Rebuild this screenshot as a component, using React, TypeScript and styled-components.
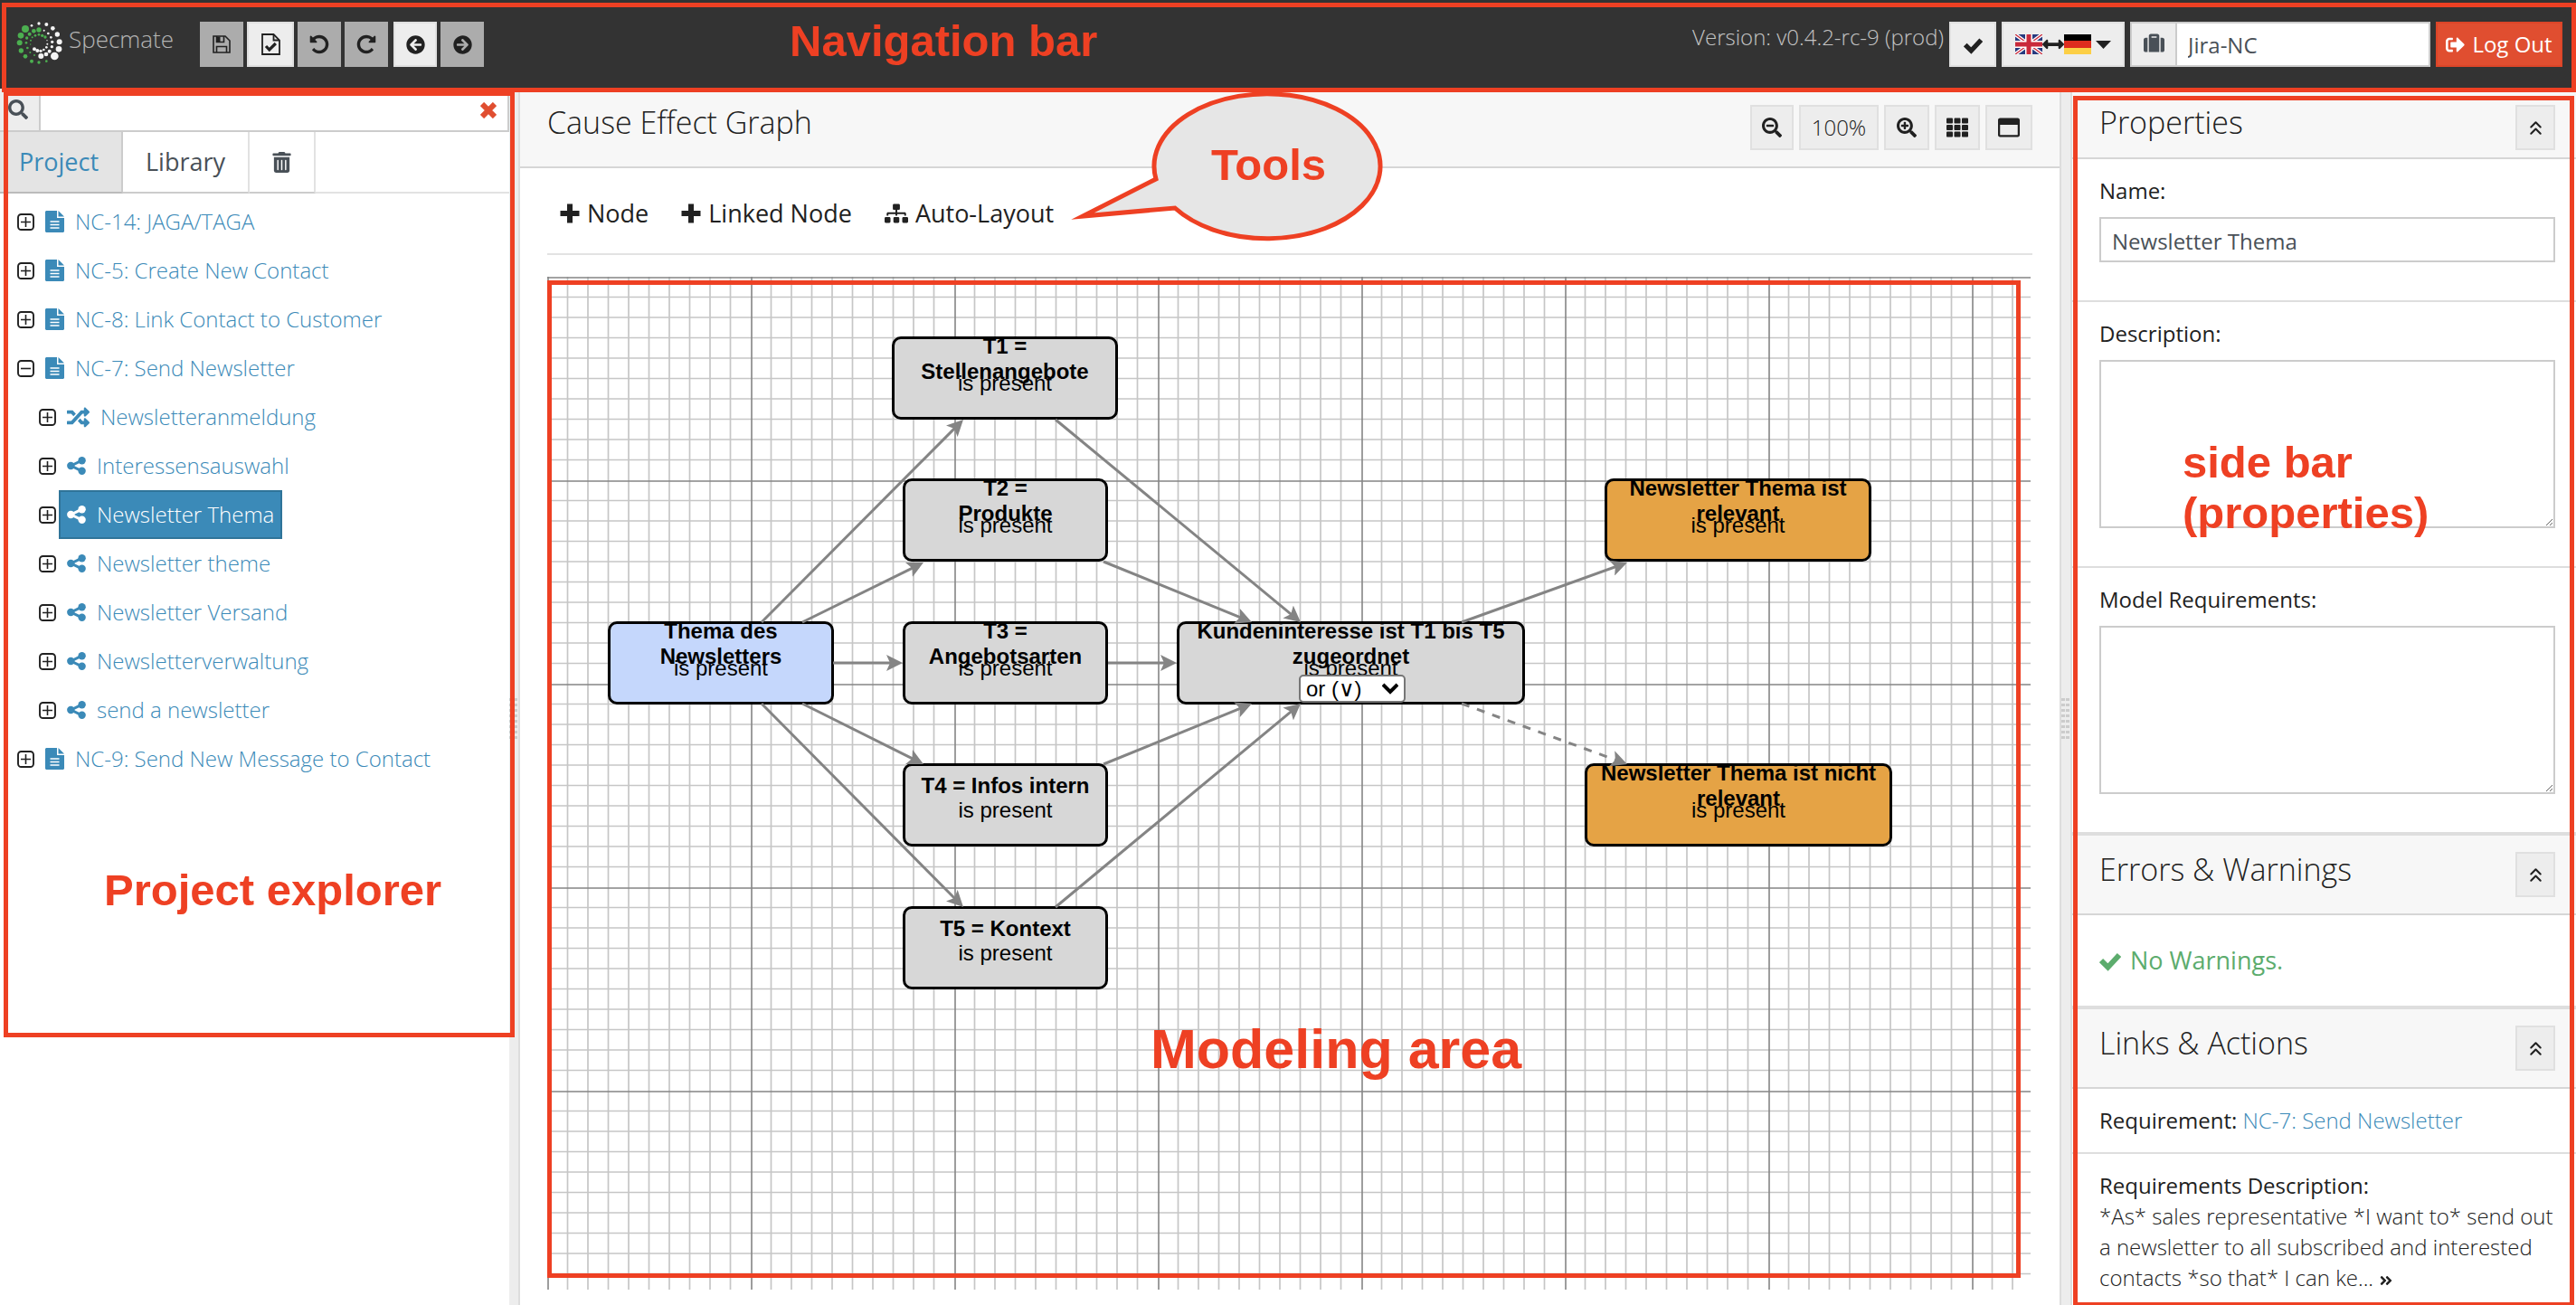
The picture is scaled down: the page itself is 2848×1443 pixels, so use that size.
import React from "react";
import styled, { createGlobalStyle, css } from "styled-components";
import {
  FaAngleDoubleRight,
  FaArrowCircleLeft,
  FaArrowCircleRight,
  FaArrowsAltH,
  FaRandom,
  FaRegWindowMaximize,
  FaSearch,
  FaSearchMinus,
  FaSearchPlus,
  FaSignOutAlt,
  FaSitemap,
  FaSuitcase,
  FaTh,
  FaTrashAlt,
} from "react-icons/fa";
import { ChevronsUp } from "lucide-react";

const c = {
  red: "#ee4023",
  dark: "#333333",
  text: "#212121",
  input: "#495057",
  link: "#3b8ab8",
  button: "#ededed",
  buttonEdge: "#e0e0e0",
  head: "#f7f7f7",
  line: "#d6d6d6",
  field: "#cccccc",
  edge: "#848484",
};

const Global = createGlobalStyle`
  *, *::before, *::after { box-sizing: border-box; }
  body { margin: 0; background: #fff; }
  body, button, input, textarea, select {
    font-family: "Open Sans", "Noto Sans", sans-serif;
    font-size: 24px;
    line-height: 34px;
    color: ${c.text};
  }
  h2, p { margin: 0; }
  a { text-decoration: none; color: ${c.link}; }
`;

/* ---------- shell ---------- */

const Shell = styled.div`
  position: relative;
  display: flex;
  flex-direction: column;
  min-height: 100vh;
  overflow: hidden;
`;

const Columns = styled.div`
  flex: 1;
  display: flex;
`;

const Gutter = styled.div<{ $both?: boolean }>`
  flex: none;
  width: ${(p) => (p.$both ? 14 : 12)}px;
  padding-top: 674px;
  background: #ededed;
  border-right: 2px solid #dddddd;
  border-left: ${(p) => (p.$both ? "2px solid #dddddd" : "none")};
`;

const Grip = styled.div`
  width: 9px;
  height: 46px;
  background:
    linear-gradient(90deg, transparent 4px, #ededed 4px, #ededed 5px, transparent 5px),
    repeating-linear-gradient(#cccccc 0 3px, transparent 3px 6px);
`;

/* ---------- annotations over the page ---------- */

const Frame = styled.div<{ $inset: string }>`
  position: absolute;
  inset: ${(p) => p.$inset};
  border: 5px solid ${c.red};
  pointer-events: none;
  z-index: 3;
`;

const Note = styled.div<{ $left: number; $top: number; $big?: boolean }>`
  position: absolute;
  left: ${(p) => p.$left}px;
  top: ${(p) => p.$top}px;
  font: bold ${(p) => (p.$big ? "61px/68px" : "49px/56px")} "Liberation Sans", Arial, sans-serif;
  color: ${c.red};
  white-space: nowrap;
  pointer-events: none;
  z-index: 4;
`;

const Balloon = styled.svg`
  position: absolute;
  left: 1180px;
  top: 94px;
  z-index: 4;
  pointer-events: none;
`;

/* ---------- navigation bar ---------- */

const Nav = styled.header`
  position: relative;
  display: flex;
  align-items: flex-start;
  padding: 24px 15px 24px 18px;
  background: ${c.dark};
`;

const Brand = styled.a`
  display: flex;
  gap: 6px;
  width: 203px;
  font-size: 26px;
  line-height: 38px;
  font-weight: 300;
  color: #b4b4b4;
`;

const Group = styled.div`
  display: flex;
  gap: 4px;
  margin-right: 6px;
`;

const Button = styled.button<{ $w?: number; $tone?: "off" | "danger" }>`
  display: flex;
  align-items: center;
  justify-content: center;
  flex: none;
  width: ${(p) => p.$w ?? 48}px;
  height: 50px;
  padding: 0;
  border: 2px solid ${c.buttonEdge};
  background: ${c.button};
  font-weight: 300;
  ${(p) =>
    p.$tone === "off" &&
    css`
      background: #acacac;
      border-color: #acacac;
    `}
  ${(p) =>
    p.$tone === "danger" &&
    css`
      gap: 8px;
      background: #e04e30;
      border-color: #dc4528;
      color: #fff;
      font-weight: 400;
    `}
`;

const Version = styled.span`
  font-weight: 300;
  color: #c4c4c4;
`;

const NavRight = styled.div`
  display: flex;
  gap: 6px;
  margin-left: auto;
`;

const ProjectField = styled.label`
  display: flex;
  width: 332px;
  height: 50px;
  border: 2px solid ${c.field};
  background: ${c.button};

  span {
    display: flex;
    align-items: center;
    justify-content: center;
    width: 50px;
    padding-bottom: 4px;
    border-right: 2px solid ${c.field};
    color: ${c.input};
  }

  input {
    flex: 1;
    min-width: 0;
    border: 0;
    padding: 2px 12px 0;
    background: #fff;
    color: ${c.input};
  }
`;

/* ---------- project explorer ---------- */

const Explorer = styled.aside`
  position: relative;
  flex: none;
  width: 563px;
`;

const SearchRow = styled.div`
  display: flex;
  align-items: center;
  height: 48px;
  border-bottom: 2px solid ${c.field};
  border-right: 2px solid ${c.field};

  label {
    display: flex;
    align-items: center;
    align-self: stretch;
    width: 45px;
    padding-left: 9px;
    background: ${c.button};
    border-right: 2px solid ${c.field};
    color: ${c.input};
  }

  input {
    flex: 1;
    min-width: 0;
    border: 0;
    background: none;
  }

  button {
    display: flex;
    padding: 2px 12px 0;
    border: 0;
    background: none;
    color: #e04e30;
  }
`;

const Tabs = styled.div`
  display: flex;
  height: 68px;
  border-bottom: 2px solid #e2e2e2;
`;

const Tab = styled.button<{ $active?: boolean; $w: number }>`
  display: flex;
  align-items: center;
  justify-content: center;
  width: ${(p) => p.$w}px;
  padding: ${(p) => (p.$active ? "0 4px 0 0" : "0")};
  border: 0;
  border-right: 2px solid ${(p) => (p.$active ? c.field : "#e2e2e2")};
  margin-bottom: -2px;
  border-bottom: 2px solid ${(p) => (p.$active ? "#bbbbbb" : "#cccccc")};
  background: ${(p) => (p.$active ? "#e4e4e4" : "#fff")};
  color: ${(p) => (p.$active ? c.link : c.input)};
  font-size: 27px;
`;

const Tree = styled.ul`
  list-style: none;
  margin: 0;
  padding: 4px 0 0 18px;

  ul {
    list-style: none;
    margin: 0;
    padding: 0 0 0 24px;
  }
`;

const TreeRow = styled.div`
  display: flex;
  align-items: center;
  gap: 2px;
`;

const TreeLink = styled.a<{ $active?: boolean }>`
  display: flex;
  align-items: center;
  gap: 12px;
  height: 54px;
  padding: 0 7px;
  border: 2px solid ${(p) => (p.$active ? "#2f7499" : "transparent")};
  background: ${(p) => (p.$active ? c.link : "none")};
  color: ${(p) => (p.$active ? "#fff" : c.link)};
  font-weight: 300;
  white-space: nowrap;
`;

/* ---------- editor ---------- */

const Editor = styled.main`
  position: relative;
  flex: 1;
  min-width: 0;
  display: flex;
  flex-direction: column;
`;

const PanelHead = styled.div<{ $kind?: "editor" | "first" }>`
  display: flex;
  align-items: flex-start;
  gap: 6px;
  padding: 18px ${(p) => (p.$kind === "editor" ? 30 : 23)}px
    ${(p) => (p.$kind === "first" ? 8 : 18)}px 30px;
  background: ${c.head};
  border-bottom: 2px solid ${c.line};
  border-top: ${(p) => (p.$kind ? "none" : "4px solid #dedede")};

  h2 {
    flex: 1;
    font-size: 34px;
    line-height: 38px;
    font-weight: 300;
  }
`;

const Toolbar = styled.div`
  display: flex;
  gap: 8px;
  margin: 0 30px;
  padding: 25px 0 19px;
  border-bottom: 2px solid #e3e3e3;
`;

const Tool = styled.button`
  display: flex;
  align-items: center;
  gap: 8px;
  height: 50px;
  padding: 0 14px;
  border: 0;
  background: none;
  font-size: 27px;
`;

const Canvas = styled.div`
  position: relative;
  flex: 1;
  margin: 24px 32px 17px 30px;
`;

const Layer = styled.svg`
  position: absolute;
  inset: 0;
  width: 100%;
  height: 100%;
  pointer-events: none;
`;

const Node = styled.div<{ $x: number; $y: number; $w: number; $fill: string }>`
  position: absolute;
  left: ${(p) => p.$x}px;
  top: ${(p) => p.$y}px;
  width: ${(p) => p.$w}px;
  height: 92px;
  display: flex;
  flex-direction: column;
  align-items: center;
  padding-top: 9px;
  border: 3px solid #000;
  border-radius: 10px;
  background: ${(p) => p.$fill};
  font: 24px/28px "Liberation Sans", Arial, sans-serif;
  color: #000;
  text-align: center;
`;

const NodeTitle = styled.strong`
  display: flex;
  align-items: center;
  flex: none;
  height: 26px;
  white-space: pre;
`;

const NodeSelect = styled.div`
  position: absolute;
  left: 132px;
  top: 56px;
  width: 118px;
  height: 31px;

  select {
    width: 100%;
    height: 100%;
    appearance: none;
    padding: 0 6px;
    border: 2px solid #767676;
    border-radius: 5px;
    background: #fff;
    font: 24px/27px "Liberation Sans", "DejaVu Sans", sans-serif;
    color: #000;
  }

  svg {
    position: absolute;
    right: 8px;
    top: 9px;
  }
`;

/* ---------- sidebar ---------- */

const Sidebar = styled.aside`
  position: relative;
  flex: none;
  width: 557px;
`;

const Section = styled.div<{ $line?: boolean; $bottom?: number }>`
  padding: 18px 23px ${(p) => p.$bottom ?? 18}px 30px;
  border-bottom: ${(p) => (p.$line ? "2px solid #dedede" : "none")};

  p { font-weight: 300; }
  a { font-weight: 300; }
  p svg { vertical-align: -2px; }
`;

const Field = styled.label`
  display: flex;
  flex-direction: column;
  gap: 12px;

  input, textarea {
    width: 100%;
    border: 2px solid ${c.field};
    border-radius: 0;
    background: #fff;
    color: ${c.input};
  }
  input { height: 50px; padding: 2px 12px 0; }
  textarea { height: 186px; padding: 8px 12px; resize: vertical; }
`;

const Success = styled.p`
  display: flex;
  align-items: center;
  gap: 10px;
  height: 100px;
  padding-left: 30px;
  font-size: 27px;
  color: #5cac6d;
`;

/* ---------- drawings ---------- */

const ring: [number, number, number, boolean][] = [
  [99, 34, 5, false], [124, 37, 6, false], [145, 50, 7, false], [160, 70, 8, false],
  [167, 95, 9, false], [165, 119, 10, false], [151, 142, 13, false], [124, 159, 4, true],
  [99, 163, 5, true], [75, 159, 6, true], [54, 143, 7, true], [40, 124, 8, true],
  [35, 98, 9, true], [39, 74, 10, true], [54, 52, 12, true], [75, 41, 4, false],
  [99, 55, 8, true], [82, 59, 7, true], [68, 69, 6, true], [59, 82, 5, true],
  [57, 98, 4, true], [61, 115, 4, true], [70, 130, 3, true], [84, 139, 3, true],
  [106, 142, 9, false], [123, 136, 7, false], [134, 126, 6, false], [142, 111, 5, false],
  [143, 95, 5, false], [139, 80, 4, false], [130, 67, 4, false], [116, 57, 3, false],
  [120, 79, 5, true], [110, 74, 5, true], [99, 71, 4, true], [87, 74, 4, true],
  [77, 80, 3, true], [72, 90, 3, true], [71, 103, 2, true], [84, 119, 6, false],
  [94, 124, 6, false], [105, 125, 5, false], [115, 121, 4, false], [124, 113, 4, false],
  [127, 102, 3, false], [126, 90, 2, false],
];

const Logo = () => (
  <svg width="52" height="47" viewBox="24 28 156 141" aria-hidden>
    {ring.map(([x, y, r, green], i) => (
      <circle key={i} cx={x} cy={y} r={r} fill={green ? "#4caf50" : "#f4f4f4"} />
    ))}
  </svg>
);

const SaveIcon = () => (
  <svg width="20" height="20" viewBox="0 0 20 20" fill="none" stroke="#212121" strokeWidth="1.6" aria-hidden>
    <path d="M1 1h13l5 5v13H1z" />
    <path d="M4.5 19v-6.5h11V19" />
    <path d="M4.5 1v6.5h8V1" />
    <path d="M4.5 1.5h4V7h-4z" fill="#212121" stroke="none" />
  </svg>
);

const FileCheckIcon = () => (
  <svg width="21" height="24" viewBox="0 0 21 24" fill="none" stroke="#212121" aria-hidden>
    <path d="M1 1h12.5L20 7.5V23H1z" strokeWidth="1.8" />
    <path d="M13.5 1v6.5H20" strokeWidth="1.8" />
    <path d="M5 14l3.8 4 7-7" strokeWidth="3.2" />
  </svg>
);

const TurnIcon = ({ redo }: { redo?: boolean }) => (
  <svg width="24" height="24" viewBox="0 0 1792 1792" fill="#212121" aria-hidden>
    <path
      transform={redo ? "translate(1792 0) scale(-1 1)" : undefined}
      d="M1664 896q0 156-61 298t-164 245-245 164-298 61q-172 0-327-72.5t-264-204.5q-7-10-6.5-22.5t8.5-20.5l137-138q10-9 25-9 16 2 23 12 73 95 179 147t225 52q104 0 198.5-40.5t163.5-109.5 109.5-163.5 40.5-198.5-40.5-198.5-109.5-163.5-163.5-109.5-198.5-40.5q-98 0-188 35.5t-160 101.5l137 138q31 30 14 69-17 40-59 40h-448q-26 0-45-19t-19-45v-448q0-42 40-59 39-17 69 14l130 129q107-101 244.5-156.5t284.5-55.5q156 0 298 61t245 164 164 245 61 298z"
    />
  </svg>
);

const Toggle = ({ open }: { open?: boolean }) => (
  <svg width="21" height="21" viewBox="0 0 21 21" fill="none" stroke="#212121" aria-hidden>
    <rect x="2" y="2" width="17" height="17" rx="3.5" strokeWidth="1.9" />
    <path d={open ? "M5 10.5h11" : "M5 10.5h11M10.5 5v11"} strokeWidth="1.6" />
  </svg>
);

const DocIcon = () => (
  <svg width="21" height="24" viewBox="0 0 21 24" fill="currentColor" aria-hidden>
    <path d="M1 0h12v8h8v15l-1 1H1l-1-1V1z" />
    <path d="M14.500 0L21 6.500h-6.500z" />
    <path d="M5.500 12h10M5.500 15.500h10M5.500 19h10" stroke="#fff" strokeWidth="1.6" />
  </svg>
);

const ShareIcon = () => (
  <svg width="21" height="20" viewBox="0 0 21 20" fill="currentColor" stroke="currentColor" aria-hidden>
    <path d="M16.5 4.200L4.500 10l12 5.800" fill="none" strokeWidth="3" />
    <g stroke="none">
      <circle cx="4.300" cy="10" r="4.200" />
      <circle cx="16.600" cy="4.300" r="4.200" />
      <circle cx="16.600" cy="15.700" r="4.200" />
    </g>
  </svg>
);

const PlusIcon = () => (
  <svg width="22" height="22" viewBox="0 0 22 22" stroke="#212121" strokeWidth="6" strokeLinejoin="round" aria-hidden>
    <path d="M0.500 11h21M11 0.500v21" />
  </svg>
);

const CrossIcon = () => (
  <svg width="18" height="18" viewBox="0 0 18 18" stroke="currentColor" strokeWidth="6" aria-hidden>
    <path d="M2 2l14 14M16 2L2 16" />
  </svg>
);

const CheckIcon = ({ width }: { width: number }) => (
  <svg width={width} height={width} viewBox="0 0 24 24" fill="none" stroke="currentColor" strokeWidth="6" aria-hidden>
    <path d="M2 12l7.500 7.500L22 6" />
  </svg>
);

const CaretIcon = styled.svg`
  margin-left: 5px;
`;

const BritishFlag = () => (
  <svg width="30" height="22" viewBox="0 0 30 22" aria-hidden>
    <rect width="30" height="22" fill="#273a7f" />
    <path d="M0 0l30 22M30 0L0 22" stroke="#fff" strokeWidth="4" />
    <path d="M0 0l30 22M30 0L0 22" stroke="#c92a3b" strokeWidth="1.4" />
    <path d="M15 0v22M0 11h30" stroke="#fff" strokeWidth="8" />
    <path d="M15 0v22M0 11h30" stroke="#c92a3b" strokeWidth="5" />
  </svg>
);

const GermanFlag = () => (
  <svg width="30" height="22" viewBox="0 0 30 22" aria-hidden>
    <rect width="30" height="22" fill="#fccf46" />
    <rect width="30" height="15" fill="#de2b1e" />
    <rect width="30" height="7" fill="#000" />
  </svg>
);

/* ---------- data ---------- */

type Item = { name: string; icon: "doc" | "flow" | "share"; active?: boolean; items?: Item[] };

const tree: Item[] = [
  { name: "NC-14: JAGA/TAGA", icon: "doc" },
  { name: "NC-5: Create New Contact", icon: "doc" },
  { name: "NC-8: Link Contact to Customer", icon: "doc" },
  {
    name: "NC-7: Send Newsletter",
    icon: "doc",
    items: [
      { name: "Newsletteranmeldung", icon: "flow" },
      { name: "Interessensauswahl", icon: "share" },
      { name: "Newsletter Thema", icon: "share", active: true },
      { name: "Newsletter theme", icon: "share" },
      { name: "Newsletter Versand", icon: "share" },
      { name: "Newsletterverwaltung", icon: "share" },
      { name: "send a newsletter", icon: "share" },
    ],
  },
  { name: "NC-9: Send New Message to Contact", icon: "doc" },
];

const grey = "#d7d7d7";
const nodes = [
  { title: "T1 =\nStellenangebote", x: 381, y: 66, w: 250, fill: grey },
  { title: "T2 =\nProdukte", x: 393, y: 223, w: 227, fill: grey },
  { title: "Thema des\nNewsletters", x: 67, y: 381, w: 250, fill: "#c5d7fc" },
  { title: "T3 =\nAngebotsarten", x: 393, y: 381, w: 227, fill: grey },
  { title: "T4 = Infos intern", x: 393, y: 538, w: 227, fill: grey },
  { title: "T5 = Kontext", x: 393, y: 696, w: 227, fill: grey },
  { title: "Kundeninteresse ist T1 bis T5\nzugeordnet", x: 696, y: 381, w: 385, fill: grey, select: true },
  { title: "Newsletter Thema ist\nrelevant", x: 1169, y: 223, w: 295, fill: "#e5a345" },
  { title: "Newsletter Thema ist nicht\nrelevant", x: 1147, y: 538, w: 340, fill: "#e5a345" },
];

const edges: [number, number, number, number, boolean?][] = [
  [237, 382, 460, 158],
  [282, 382, 416, 316],
  [316, 427, 393, 427],
  [282, 472, 416, 539],
  [237, 472, 460, 697],
  [562, 158, 833, 382],
  [615, 315, 779, 382],
  [620, 427, 696, 427],
  [615, 539, 779, 472],
  [562, 697, 833, 472],
  [1011, 382, 1194, 316],
  [1011, 472, 1194, 539, true],
];

/* ---------- parts ---------- */

const icons = {
  doc: <DocIcon />,
  flow: <FaRandom size={25} />,
  share: <ShareIcon />,
};

const TreeItem = ({ item }: { item: Item }) => (
  <li>
    <TreeRow>
      <Toggle open={!!item.items} />
      <TreeLink href="#" $active={item.active}>
        {icons[item.icon]}
        {item.name}
      </TreeLink>
    </TreeRow>
    {item.items && (
      <ul>
        {item.items.map((child) => (
          <TreeItem key={child.name} item={child} />
        ))}
      </ul>
    )}
  </li>
);

const minors = Array.from({ length: 9 }, (_, i) => ((i + 1) * 45) / 2);

const Grid = () => (
  <Layer aria-hidden>
    <defs>
      <pattern id="grid" width="225" height="225" patternUnits="userSpaceOnUse">
        {minors.map((m) => (
          <path key={m} d={`M${m} 0v225M0 ${m}h225`} stroke="#c6c6c6" strokeWidth="1.7" />
        ))}
        <path d="M1 0v225M0 1h225" stroke="#858585" strokeWidth="1.6" />
      </pattern>
    </defs>
    <rect width="100%" height="100%" fill="url(#grid)" />
  </Layer>
);

const Edges = () => (
  <Layer aria-hidden>
    <defs>
      <marker id="tip" markerUnits="userSpaceOnUse" markerWidth="18" markerHeight="18" refX="18" refY="9" orient="auto">
        <path d="M0 0l18 9-18 9 4-9z" fill={c.edge} />
      </marker>
    </defs>
    {edges.map(([x1, y1, x2, y2, dashed], i) => {
      const len = Math.hypot(x2 - x1, y2 - y1);
      const k = (len - 8) / len;
      return (
        <g key={i}>
          <line
            x1={x1}
            y1={y1}
            x2={x1 + (x2 - x1) * k}
            y2={y1 + (y2 - y1) * k}
            stroke={c.edge}
            strokeWidth="3"
            strokeDasharray={dashed ? "9 9" : undefined}
          />
          <line x1={x1} y1={y1} x2={x2} y2={y2} markerEnd="url(#tip)" stroke="none" />
        </g>
      );
    })}
  </Layer>
);

const Collapse = ({ of }: { of: string }) => (
  <Button $w={44} aria-label={`Collapse ${of}`}>
    <ChevronsUp size={25} strokeWidth={2} />
  </Button>
);

export default function App() {
  return (
    <Shell>
      <Global />
      <Nav>
        <Brand href="#">
          <Logo />
          Specmate
        </Brand>
        <Group>
          <Button $tone="off" aria-label="Save"><SaveIcon /></Button>
          <Button $w={52} aria-label="Check"><FileCheckIcon /></Button>
          <Button $tone="off" aria-label="Undo"><TurnIcon /></Button>
          <Button $tone="off" aria-label="Redo"><TurnIcon redo /></Button>
        </Group>
        <Group>
          <Button aria-label="Back"><FaArrowCircleLeft size={21} /></Button>
          <Button $tone="off" aria-label="Forward"><FaArrowCircleRight size={21} /></Button>
        </Group>
        <NavRight>
          <Version>Version: v0.4.2-rc-9 (prod)</Version>
          <Button $w={52} aria-label="Confirm"><CheckIcon width={21} /></Button>
          <Button $w={136} aria-label="Language">
            <BritishFlag />
            <FaArrowsAltH size={24} />
            <GermanFlag />
            <CaretIcon width="17" height="9" viewBox="0 0 17 9" fill="#212121" aria-hidden>
              <path d="M0 0h17L8.500 9z" />
            </CaretIcon>
          </Button>
          <ProjectField>
            <span><FaSuitcase size={23} /></span>
            <input type="text" defaultValue="Jira-NC" aria-label="Project" />
          </ProjectField>
          <Button $w={140} $tone="danger"><FaSignOutAlt size={21} />Log Out</Button>
        </NavRight>
        <Frame $inset="3px 0 -4px 2px" />
        <Note $left={873} $top={17}>Navigation bar</Note>
      </Nav>

      <Columns>
        <Explorer>
          <SearchRow>
            <label htmlFor="search" aria-label="Search"><FaSearch size={22} /></label>
            <input id="search" type="text" />
            <button aria-label="Clear search"><CrossIcon /></button>
          </SearchRow>
          <Tabs>
            <Tab $active $w={136}>Project</Tab>
            <Tab $w={140}>Library</Tab>
            <Tab $w={73} aria-label="Trash"><FaTrashAlt size={23} /></Tab>
          </Tabs>
          <Tree>
            {tree.map((item) => (
              <TreeItem key={item.name} item={item} />
            ))}
          </Tree>
          <Frame $inset="3px -6px 296px 4px" />
          <Note $left={115} $top={858}>Project explorer</Note>
        </Explorer>
        <Gutter><Grip /></Gutter>

        <Editor>
          <PanelHead $kind="editor">
            <h2>Cause Effect Graph</h2>
            <Button aria-label="Zoom out"><FaSearchMinus size={22} /></Button>
            <Button $w={88}>100%</Button>
            <Button $w={50} aria-label="Zoom in"><FaSearchPlus size={22} /></Button>
            <Button $w={50} aria-label="Grid"><FaTh size={24} /></Button>
            <Button $w={52} aria-label="Maximize"><FaRegWindowMaximize size={24} /></Button>
          </PanelHead>
          <Toolbar>
            <Tool><PlusIcon />Node</Tool>
            <Tool><PlusIcon />Linked Node</Tool>
            <Tool><FaSitemap size={26} />Auto-Layout</Tool>
          </Toolbar>
          <Canvas>
            <Grid />
            {nodes.map((n) => (
              <Node key={n.title} $x={n.x} $y={n.y} $w={n.w} $fill={n.fill}>
                <NodeTitle>{n.title}</NodeTitle>
                <span>is present</span>
                {n.select && (
                  <NodeSelect>
                    <select aria-label="Operator" defaultValue="or">
                      <option value="or">or (∨)</option>
                      <option value="and">and (∧)</option>
                    </select>
                    <svg width="18" height="13" viewBox="0 0 18 13" fill="none" stroke="#000" strokeWidth="4" aria-hidden>
                      <path d="M1 2l8 8 8-8" />
                    </svg>
                  </NodeSelect>
                )}
              </Node>
            ))}
            <Edges />
            <Frame $inset="4px 11px 13px 0" />
            <Note $left={667} $top={820} $big>Modeling area</Note>
          </Canvas>
        </Editor>
        <Gutter $both><Grip /></Gutter>

        <Sidebar>
          <PanelHead $kind="first">
            <h2>Properties</h2>
            <Collapse of="Properties" />
          </PanelHead>
          <Section $line $bottom={42}>
            <Field>Name:<input type="text" defaultValue="Newsletter Thema" /></Field>
          </Section>
          <Section $line $bottom={42}>
            <Field>Description:<textarea /></Field>
          </Section>
          <Section $bottom={42}>
            <Field>Model Requirements:<textarea /></Field>
          </Section>
          <PanelHead>
            <h2>Errors &amp; Warnings</h2>
            <Collapse of="Errors & Warnings" />
          </PanelHead>
          <Success><CheckIcon width={24} />No Warnings.</Success>
          <PanelHead>
            <h2>Links &amp; Actions</h2>
            <Collapse of="Links & Actions" />
          </PanelHead>
          <Section $line>
            Requirement: <a href="#">NC-7: Send Newsletter</a>
          </Section>
          <Section $bottom={12}>
            Requirements Description:
            <p>
              *As* sales representative *I want to* send out a newsletter to all subscribed and
              interested contacts *so that* I can ke... <FaAngleDoubleRight size={16} />
            </p>
          </Section>
          <Frame $inset="8px 2px -2px 1px" />
          <Note $left={122} $top={385}>side bar<br />(properties)</Note>
        </Sidebar>
      </Columns>

      <Balloon width="360" height="180" viewBox="1180 94 360 180" aria-hidden>
        <path
          d="M1278 198L1197 239L1299 230A125 80 0 1 0 1278 198Z"
          fill="#e6e6e6"
          stroke={c.red}
          strokeWidth="5"
          strokeMiterlimit="10"
        />
      </Balloon>
      <Note $left={1339} $top={154}>Tools</Note>
    </Shell>
  );
}
